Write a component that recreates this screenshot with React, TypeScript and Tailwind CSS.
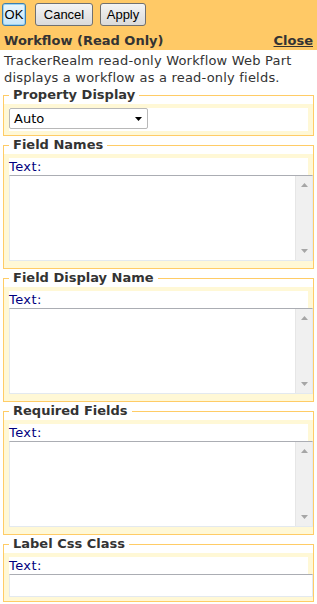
import type { ReactNode } from "react";

const verdana = "font-['DejaVu_Sans',Verdana,sans-serif]";

function ScrollBar() {
  return (
    <div className="flex w-[17px] shrink-0 flex-col items-center justify-between border-l border-[#e6e6e6] bg-[#f0f0f0] py-[7px]">
      <svg width="7" height="4" viewBox="0 0 7 4">
        <path d="M0 4 L3.5 0 L7 4 Z" fill="#a6a6a6" />
      </svg>
      <svg width="7" height="4" viewBox="0 0 7 4">
        <path d="M0 0 L3.5 4 L7 0 Z" fill="#a6a6a6" />
      </svg>
    </div>
  );
}

function TextArea() {
  return (
    <div className="flex h-[86px] w-[304px] border border-[#e3e9ef] border-t-[#abadb3] bg-white">
      <div className="flex-1" />
      <ScrollBar />
    </div>
  );
}

function Section({ title, children }: { title: string; children: ReactNode }) {
  return (
    <fieldset className="mx-[3px] min-w-0 border border-[#ffcc66] bg-white">
      <legend className="ml-[5px] px-[4px] text-[13px] leading-[18px] font-bold text-[#333]">
        {title}
      </legend>
      <div className="bg-[#fff8d6] px-[5px] py-[4px]">{children}</div>
    </fieldset>
  );
}

function TextField({ title, area }: { title: string; area?: boolean }) {
  return (
    <Section title={title}>
      <div className="h-[17px] bg-white text-[13px] leading-[17px] tracking-[0.4px] text-[#000080]">Text:</div>
      {area ? (
        <div className="pb-[3px]">
          <TextArea />
        </div>
      ) : (
        <div className="h-[23px] w-[304px] border border-[#e3e9ef] border-t-[#abadb3] bg-white" />
      )}
    </Section>
  );
}

export default function App() {
  return (
    <div className={`h-[604px] w-[317px] overflow-hidden bg-white ${verdana}`}>
      {/* header */}
      <div className="bg-[#ffc966]">
        <div className="flex h-[32px] items-start pt-[3px] font-['Liberation_Sans',Arial,sans-serif] text-[13px] text-black">
          <button className="ml-[2px] h-[23px] w-[24px] rounded-[3px] border border-[#3c7fb1] bg-gradient-to-b from-[#eaf6fd] to-[#c8e6f8] shadow-[inset_0_0_0_1px_#9bd3f2]">
            OK
          </button>
          <button className="ml-[9px] h-[23px] w-[58px] rounded-[3px] border border-[#707070] bg-gradient-to-b from-[#f4f4f4] to-[#dadada]">
            Cancel
          </button>
          <button className="ml-[7px] h-[23px] w-[46px] rounded-[3px] border border-[#707070] bg-gradient-to-b from-[#f4f4f4] to-[#dadada]">
            Apply
          </button>
        </div>
        <div className="flex h-[18px] items-center justify-between px-[4px] text-[13px] leading-[18px] font-bold text-[#333]">
          <span>Workflow (Read Only)</span>
          <a className="underline">Close</a>
        </div>
      </div>

      {/* description */}
      <div className="h-[36px] px-[4px] pt-[2px] text-[13px] leading-[17px] tracking-[0.2px] text-[#333]">
        TrackerRealm read-only Workflow Web Part displays a workflow as a read-only fields.
      </div>

      <Section title="Property Display">
        <div className="h-[23px] bg-white">
          <div className="flex h-[21px] w-[139px] items-center justify-between rounded-[2px] border border-[#b8b8b8] bg-white pr-[5px] pl-[4px] text-[13px] text-black">
            <span>Auto</span>
            <svg width="7" height="4" viewBox="0 0 7 4">
              <path d="M0 0 L7 0 L3.5 4 Z" fill="#000" />
            </svg>
          </div>
        </div>
      </Section>

      <TextField title="Field Names" area />
      <TextField title="Field Display Name" area />
      <TextField title="Required Fields" area />
      <TextField title="Label Css Class" />
    </div>
  );
}
